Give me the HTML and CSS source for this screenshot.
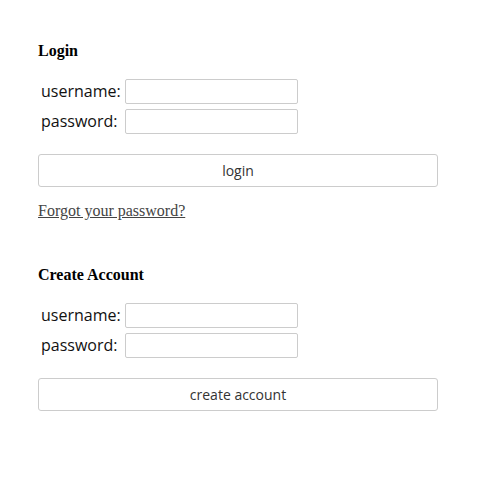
FILE: index.html
```html
<!DOCTYPE html>
<html>
<head>
<meta charset="utf-8">
<link rel="stylesheet" href="styles.css">
</head>
<body>
<div class="page">
  <section class="block">
    <h3 class="title">Login</h3>
    <div class="fields">
      <label class="label">username:</label><input class="input" type="text">
      <label class="label">password:</label><input class="input" type="password">
    </div>
    <button class="btn">login</button>
    <a class="link" href="#">Forgot your password?</a>
  </section>
  <section class="block second">
    <h3 class="title">Create Account</h3>
    <div class="fields">
      <label class="label">username:</label><input class="input" type="text">
      <label class="label">password:</label><input class="input" type="password">
    </div>
    <button class="btn">create account</button>
  </section>
</div>
</body>
</html>
```
FILE: styles.css
```css
html, body {
  margin: 0;
  padding: 0;
  background: #fff;
}
.page {
  padding: 42px 0 0 38px;
  width: 400px;
}
.block {
  display: flex;
  flex-direction: column;
  align-items: flex-start;
}
.second {
  margin-top: 46px;
}
.title {
  margin: 0;
  font-family: "Liberation Serif", serif;
  font-weight: bold;
  font-size: 16px;
  line-height: 18px;
  color: #000;
}
.fields {
  margin-top: 19px;
  display: grid;
  grid-template-columns: auto 173px;
  column-gap: 4px;
  row-gap: 5px;
  padding-left: 3px;
  align-items: center;
}
.label {
  font-family: "Open Sans", sans-serif;
  font-size: 16px;
  color: #111;
  line-height: 25px;
}
.input {
  box-sizing: border-box;
  width: 173px;
  height: 25px;
  margin: 0;
  border: 1px solid #ccc;
  border-radius: 2px;
  background: #fff;
  padding: 0 4px;
}
.btn {
  margin-top: 20px;
  box-sizing: border-box;
  width: 400px;
  height: 33px;
  border: 1px solid #ccc;
  border-radius: 3px;
  background: #fff;
  font-family: "Open Sans", sans-serif;
  font-size: 14px;
  color: #333;
  padding: 0;
}
.link {
  margin-top: 15px;
  font-family: "Liberation Serif", serif;
  font-size: 16px;
  line-height: 18px;
  color: #444;
  text-decoration: underline;
}
```
